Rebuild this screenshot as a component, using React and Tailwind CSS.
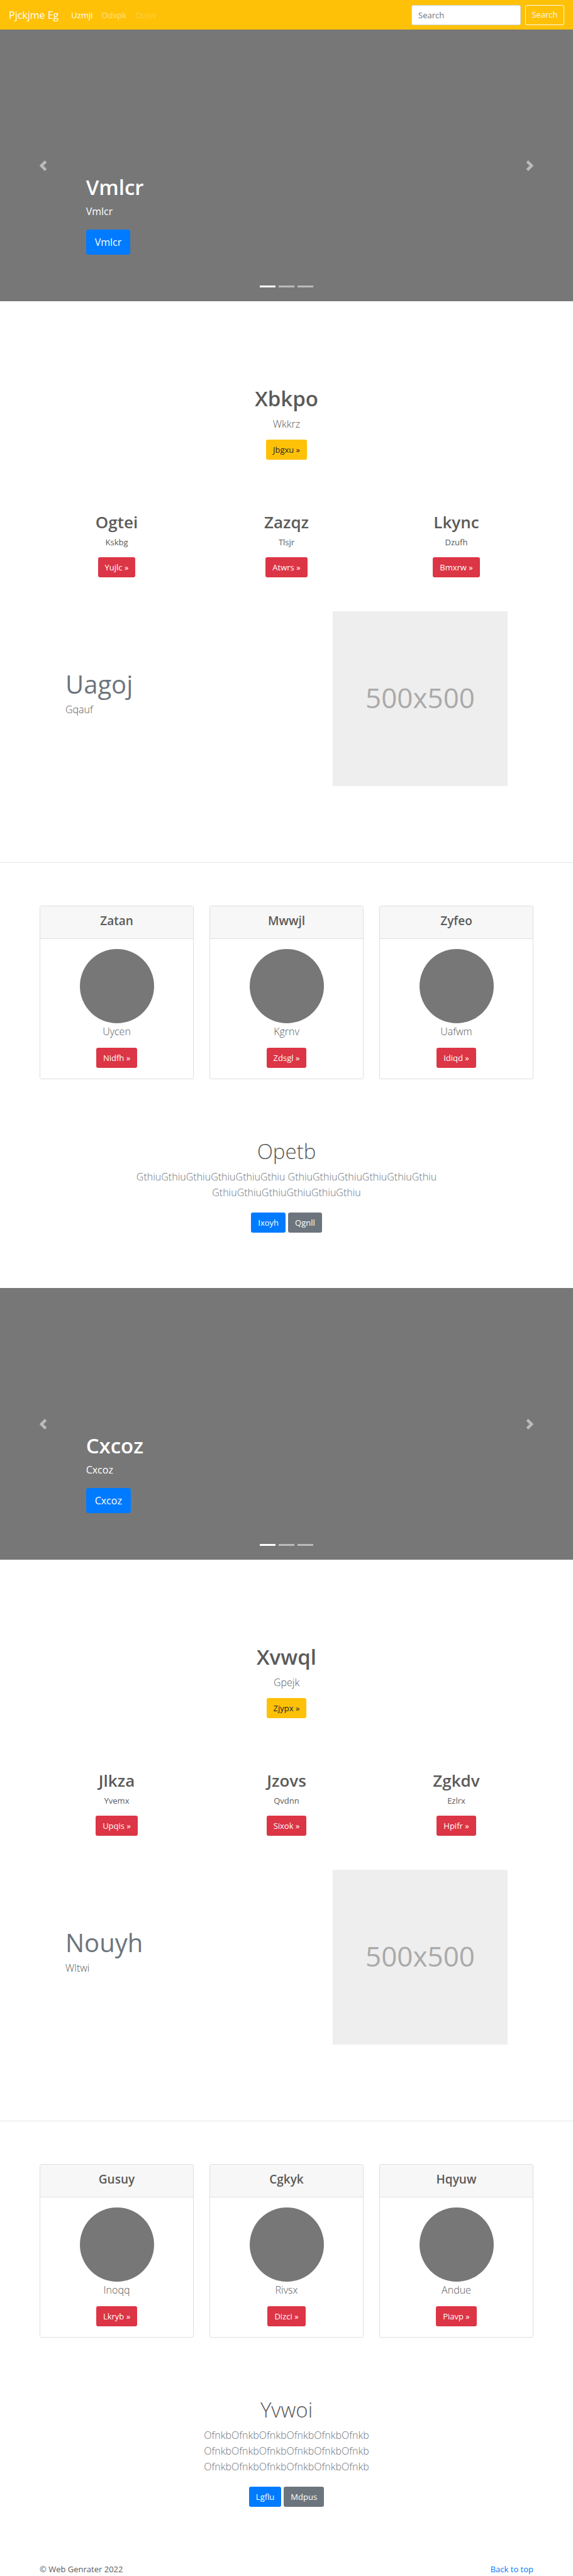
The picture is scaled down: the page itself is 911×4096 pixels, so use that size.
const buttonTones = {
  warning: "bg-[#ffc107] text-[#212529]",
  danger: "bg-[#dc3545] text-white",
  primary: "bg-[#007bff] text-white",
  secondary: "bg-[#6c757d] text-white",
};

const sections = [
  {
    id: "first",
    hero: "Vmlcr",
    intro: { title: "Xbkpo", text: "Wkkrz", action: "Jbgxu" },
    columns: [
      { title: "Ogtei", text: "Kskbg", action: "Yujlc" },
      { title: "Zazqz", text: "Tlsjr", action: "Atwrs" },
      { title: "Lkync", text: "Dzufh", action: "Bmxrw" },
    ],
    feature: { title: "Uagoj", text: "Gqauf" },
    cards: [
      { title: "Zatan", text: "Uycen", action: "Nidfh" },
      { title: "Mwwjl", text: "Kgrnv", action: "Zdsgl" },
      { title: "Zyfeo", text: "Uafwm", action: "Idiqd" },
    ],
    closing: {
      title: "Opetb",
      lines: [
        "GthiuGthiuGthiuGthiuGthiuGthiu GthiuGthiuGthiuGthiuGthiuGthiu",
        "GthiuGthiuGthiuGthiuGthiuGthiu",
      ],
      primary: "Ixoyh",
      secondary: "Qgnll",
    },
  },
  {
    id: "second",
    hero: "Cxcoz",
    intro: { title: "Xvwql", text: "Gpejk", action: "Zjypx" },
    columns: [
      { title: "Jlkza", text: "Yvemx", action: "Upqis" },
      { title: "Jzovs", text: "Qvdnn", action: "Sixok" },
      { title: "Zgkdv", text: "Ezlrx", action: "Hpifr" },
    ],
    feature: { title: "Nouyh", text: "Wltwi" },
    cards: [
      { title: "Gusuy", text: "Inoqq", action: "Lkryb" },
      { title: "Cgkyk", text: "Rivsx", action: "Dizci" },
      { title: "Hqyuw", text: "Andue", action: "Piavp" },
    ],
    closing: {
      title: "Yvwoi",
      lines: [
        "OfnkbOfnkbOfnkbOfnkbOfnkbOfnkb",
        "OfnkbOfnkbOfnkbOfnkbOfnkbOfnkb",
        "OfnkbOfnkbOfnkbOfnkbOfnkbOfnkb",
      ],
      primary: "Lgflu",
      secondary: "Mdpus",
    },
  },
];

function ActionLink({ tone, children }) {
  return (
    <a
      href="#"
      className={`inline-flex h-8 items-center rounded-[3px] px-[11px] text-[13px] leading-5 ${buttonTones[tone]}`}
    >
      {children}
    </a>
  );
}

function Lead({ children, muted }) {
  return (
    <p className={`text-[16px] leading-[25px] font-light ${muted ? "text-[#6c757d]" : ""}`}>
      {children}
    </p>
  );
}

function Navbar() {
  return (
    <header className="flex h-[47px] items-center bg-[#ffc107] px-[14px] text-white">
      <a href="#" className="text-[16px] leading-6">
        Pjckjme Eg
      </a>
      <nav className="ml-5 flex gap-[14px] text-[13px] leading-5">
        <a href="#">Uzmji</a>
        <a href="#" className="text-white/50">
          Odxpk
        </a>
        <a href="#" className="text-white/25">
          Dtovt
        </a>
      </nav>
      <form className="ml-auto flex gap-[7px]">
        <input
          type="search"
          aria-label="Search"
          placeholder="Search"
          className="h-8 w-[174px] rounded-[3px] border border-[#ced4da] bg-white px-[10px] text-[13px] text-[#495057] placeholder:text-[#6c757d]"
        />
        <button
          type="button"
          className="h-8 w-[62px] rounded-[3px] border border-[#f8f9fa] text-center text-[13px] text-[#f8f9fa]"
        >
          Search
        </button>
      </form>
    </header>
  );
}

function Carousel({ text }) {
  return (
    <section className="relative flex h-[432px] flex-col items-start justify-end bg-[#777] px-[15%] pb-[74px] text-white">
      <h1 className="mb-[5px] text-[33px] leading-[42px] font-semibold">{text}</h1>
      <p className="text-[16px] leading-[25px]">{text}</p>
      <a
        href="#"
        className="mt-4 inline-flex h-10 items-center rounded-[4px] bg-[#007bff] px-[14px] text-[16px] leading-6"
      >
        {text}
      </a>
      <button
        type="button"
        aria-label="Previous"
        className="absolute inset-y-0 left-0 flex w-[15%] items-center justify-center opacity-50"
      >
        <svg viewBox="0 0 8 8" className="size-[17px] fill-white">
          <path d="M5.25 0l-4 4 4 4 1.5-1.5L4.25 4l2.5-2.5L5.25 0z" />
        </svg>
      </button>
      <button
        type="button"
        aria-label="Next"
        className="absolute inset-y-0 right-0 flex w-[15%] items-center justify-center opacity-50"
      >
        <svg viewBox="0 0 8 8" className="size-[17px] fill-white">
          <path d="M2.75 0l-1.5 1.5L3.75 4l-2.5 2.5L2.75 8l4-4-4-4z" />
        </svg>
      </button>
      <div className="absolute inset-x-0 bottom-[22px] flex justify-center gap-[5px]">
        <button type="button" aria-label="Slide 1" className="h-[3px] w-[25px] bg-white" />
        <button type="button" aria-label="Slide 2" className="h-[3px] w-[25px] bg-white/50" />
        <button type="button" aria-label="Slide 3" className="h-[3px] w-[25px] bg-white/50" />
      </div>
    </section>
  );
}

function Intro({ title, text, action }) {
  return (
    <section className="flex flex-col items-center pt-[134px] text-center">
      <h1 className="mb-[7px] text-[33px] leading-[42px] font-semibold">{title}</h1>
      <Lead>{text}</Lead>
      <div className="mt-3 flex">
        <ActionLink tone="warning">{action} »</ActionLink>
      </div>
    </section>
  );
}

function Columns({ items }) {
  return (
    <section className="mx-auto mt-[82px] grid max-w-[785px] grid-cols-3 gap-[25px] text-center">
      {items.map((item) => (
        <div key={item.title} className="flex flex-col items-center">
          <h2 className="mb-[5px] text-[26px] leading-[34px] font-semibold">{item.title}</h2>
          <p className="mb-[14px] text-[13px] leading-5">{item.text}</p>
          <ActionLink tone="danger">{item.action} »</ActionLink>
        </div>
      ))}
    </section>
  );
}

function Feature({ title, text }) {
  return (
    <section className="mx-auto mt-[54px] flex max-w-[703px] items-start justify-between">
      <div className="pt-[95px]">
        <h2 className="mb-[7px] text-[40px] leading-[42px] text-[#6c757d]">{title}</h2>
        <Lead>{text}</Lead>
      </div>
      <div className="flex size-[278px] items-center justify-center bg-[#eee] pb-1 text-[44px] text-[#aaa]">
        500x500
      </div>
    </section>
  );
}

function Cards({ items }) {
  return (
    <section className="mx-auto mt-[68px] grid max-w-[785px] grid-cols-3 gap-[25px] text-center">
      {items.map((item) => (
        <article key={item.title} className="overflow-hidden rounded-[3px] border border-[#dfdfdf]">
          <h4 className="border-b border-[#dfdfdf] bg-[#f7f7f7] pt-[11px] pb-4 text-[19px] leading-6 font-semibold">
            {item.title}
          </h4>
          <div className="flex flex-col items-center pt-4 pb-[17px]">
            <div className="mb-px size-[118px] rounded-full bg-[#777]" />
            <Lead>{item.text}</Lead>
            <div className="mt-[13px] flex">
              <ActionLink tone="danger">{item.action} »</ActionLink>
            </div>
          </div>
        </article>
      ))}
    </section>
  );
}

function Closing({ title, lines, primary, secondary }) {
  return (
    <section className="flex flex-col items-center pt-[94px] pb-[88px] text-center">
      <h1 className="mb-[7px] text-[33px] leading-[42px] font-light">{title}</h1>
      {lines.map((line, index) => (
        <Lead key={index} muted>
          {line}
        </Lead>
      ))}
      <div className="mt-[19px] flex gap-1">
        <ActionLink tone="primary">{primary}</ActionLink>
        <ActionLink tone="secondary">{secondary}</ActionLink>
      </div>
    </section>
  );
}

export default function App() {
  return (
    <div className="bg-white font-['Open_Sans','Noto_Sans',sans-serif] text-[#5a5a5a]">
      <Navbar />
      <main>
        {sections.map((section) => (
          <div key={section.id}>
            <Carousel text={section.hero} />
            <Intro {...section.intro} />
            <Columns items={section.columns} />
            <Feature {...section.feature} />
            <hr className="mt-[121px] border-t border-[#e5e5e5]" />
            <Cards items={section.cards} />
            <Closing {...section.closing} />
          </div>
        ))}
      </main>
      <footer className="mx-auto flex max-w-[785px] justify-between text-[13px] leading-[22px]">
        <p>© Web Genrater 2022</p>
        <a href="#" className="text-[#007bff]">
          Back to top
        </a>
      </footer>
    </div>
  );
}
